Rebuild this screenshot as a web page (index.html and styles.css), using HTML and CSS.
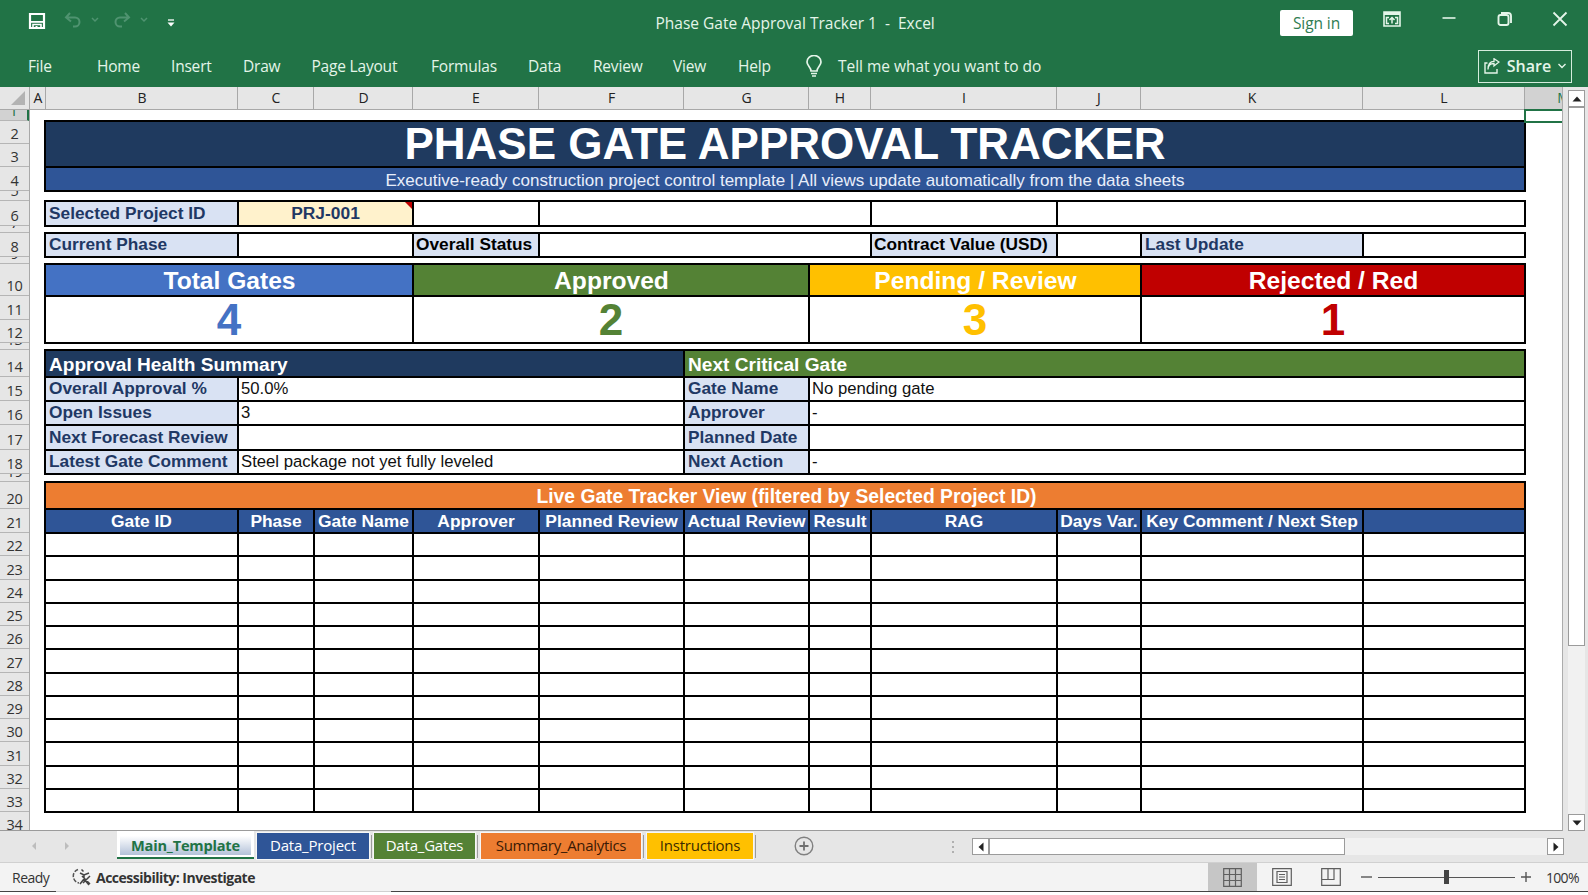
FILE: index.html
```html
<!DOCTYPE html>
<html lang="en">
<head>
    <meta charset="UTF-8">
    <meta name="viewport" content="width=device-width, initial-scale=1.0">
    <title>Phase Gate Approval Tracker 1 - Excel</title>
    <link rel="stylesheet" href="styles.css">
</head>
<body>
    <div class="window">
        <!-- Title bar -->
        <header class="titlebar">
            <div class="quick-access">
                <svg width="18" height="18" viewBox="0 0 18 18"><path d="M2 2h14v14H2z" fill="none" stroke="#fff" stroke-width="2.200"/><path d="M2.500 9h13v1.800h-13z" fill="#fff"/><path d="M5 16v-3.500h8V16" fill="none" stroke="#fff" stroke-width="1.600"/><path d="M7.500 14h2v3h-2z" fill="#fff"/></svg>
                <svg class="dim undo" width="18" height="16" viewBox="0 0 18 16"><path d="M6 1L2 5.500L7 9.500M2.500 5.500H11a4.500 4.500 0 0 1 0 9H9" fill="none" stroke="currentColor" stroke-width="2"/></svg>
                <svg class="dim caret" width="8" height="6" viewBox="0 0 8 6"><path d="M1 1l3 3 3-3" fill="none" stroke="currentColor" stroke-width="1.500"/></svg>
                <svg class="dim redo" width="18" height="16" viewBox="0 0 18 16"><path d="M12 1l4 4.500L11 9.500M15.500 5.500H7a4.500 4.500 0 0 0 0 9H9" fill="none" stroke="currentColor" stroke-width="2"/></svg>
                <svg class="dim caret" width="8" height="6" viewBox="0 0 8 6"><path d="M1 1l3 3 3-3" fill="none" stroke="currentColor" stroke-width="1.500"/></svg>
                <svg class="customize" width="8" height="9" viewBox="0 0 8 9"><path d="M1 1h6" stroke="#fff" stroke-width="1.300"/><path d="M0.500 3.500h7L4 7.500z" fill="#fff"/></svg>
            </div>
            <div class="doc-title">Phase Gate Approval Tracker 1&nbsp; -&nbsp; Excel</div>
            <div class="window-buttons">
                <button class="sign-in">Sign in</button>
                <svg class="ribbon-opt" width="18" height="16" viewBox="0 0 18 16"><path d="M1 1h16v14H1z" fill="none" stroke="#e4f5e9" stroke-width="1.600"/><path d="M1 1h16v3H1z" fill="#e4f5e9"/><path d="M9 12.500V7M6.500 9L9 6.500 11.500 9M6 12.500H3.500V6.500H6M12 12.500h2.500V6.500H12" fill="none" stroke="#e4f5e9" stroke-width="1.500"/></svg>
                <svg class="minimize" width="14" height="16" viewBox="0 0 14 16"><path d="M0.500 7h13" stroke="#e4f5e9" stroke-width="1.600"/></svg>
                <svg class="restore" width="16" height="16" viewBox="0 0 16 16"><rect x="1.500" y="4" width="10" height="10" rx="2" fill="none" stroke="#e4f5e9" stroke-width="1.900"/><path d="M4 2h7a3 3 0 0 1 3 3v7" fill="none" stroke="#e4f5e9" stroke-width="1.900"/></svg>
                <svg class="close" width="16" height="16" viewBox="0 0 16 16"><path d="M1.500 1.500l13 13M14.500 1.500l-13 13" stroke="#e4f5e9" stroke-width="1.800"/></svg>
            </div>
        </header>

        <!-- Ribbon tabs -->
        <nav class="ribbon">
            <a>File</a><a>Home</a><a>Insert</a><a>Draw</a><a>Page Layout</a><a>Formulas</a>
            <a>Data</a><a>Review</a><a>View</a><a>Help</a>
            <svg class="bulb" width="16" height="22" viewBox="0 0 16 22"><path d="M5 16c0-4-4-5-4-9a7 6.500 0 0 1 14 0c0 4-4 5-4 9z" fill="none" stroke="#e4f5e9" stroke-width="1.700"/><path d="M5 18.500h6M6 21h4" fill="none" stroke="#e4f5e9" stroke-width="1.700"/></svg>
            <span class="tell-me">Tell me what you want to do</span>
            <button class="share">
                <svg width="16" height="16" viewBox="0 0 16 16"><path d="M3.500 5H1v10h12v-4" fill="none" stroke="#e4f5e9" stroke-width="1.400"/><path d="M4 11.500c0-4 2.500-6 6-6V8l5-4-5-3.300v2.600c-3 0-6 2-6 8.200" fill="none" stroke="#e4f5e9" stroke-width="1.300"/></svg>
                <span>Share</span>
                <svg width="8" height="6" viewBox="0 0 8 6"><path d="M0.500 1l3.500 3.500L7.500 1" fill="none" stroke="#e4f5e9" stroke-width="1.400"/></svg>
            </button>
        </nav>

        <!-- Worksheet -->
        <main class="workbook">
            <div class="sheet">
                <div class="col-heads" id="colHeads">
                    <span class="corner"><svg width="14" height="14" viewBox="0 0 14 14"><path d="M14 0v14H0z" fill="#b3b3b3"/></svg></span>
                </div>
                <div class="sheet-body">
                    <div class="row-heads" id="rowHeads"></div>
                    <div class="cells">
                        <div class="row h46"><div class="cell title s11">PHASE GATE APPROVAL TRACKER</div></div>
                        <div class="row h24"><div class="cell subtitle s11">Executive-ready construction project control template | All views update automatically from the data sheets</div></div>

                        <div class="row h25 gap10">
                            <div class="cell label">Selected Project ID</div>
                            <div class="cell picker s2">PRJ-001</div>
                            <div class="cell"></div>
                            <div class="cell s3"></div>
                            <div class="cell"></div>
                            <div class="cell s3"></div>
                        </div>

                        <div class="row h24 gap7">
                            <div class="cell label">Current Phase</div>
                            <div class="cell s2"></div>
                            <div class="cell label dark">Overall Status</div>
                            <div class="cell s3"></div>
                            <div class="cell label dark">Contract Value (USD)</div>
                            <div class="cell"></div>
                            <div class="cell label">Last Update</div>
                            <div class="cell"></div>
                        </div>

                        <div class="row h32 gap7">
                            <div class="cell kpi blue s3">Total Gates</div>
                            <div class="cell kpi green s3">Approved</div>
                            <div class="cell kpi yellow s3">Pending / Review</div>
                            <div class="cell kpi red s2">Rejected / Red</div>
                        </div>
                        <div class="row h47">
                            <div class="cell num blue-text s3">4</div>
                            <div class="cell num green-text s3">2</div>
                            <div class="cell num yellow-text s3">3</div>
                            <div class="cell num red-text s2">1</div>
                        </div>

                        <div class="row h27 gap7">
                            <div class="cell section navy s5">Approval Health Summary</div>
                            <div class="cell section green s6">Next Critical Gate</div>
                        </div>
                        <div class="row h24">
                            <div class="cell label">Overall Approval %</div>
                            <div class="cell value s4">50.0%</div>
                            <div class="cell label">Gate Name</div>
                            <div class="cell value s5">No pending gate</div>
                        </div>
                        <div class="row h24">
                            <div class="cell label">Open Issues</div>
                            <div class="cell value s4">3</div>
                            <div class="cell label">Approver</div>
                            <div class="cell value s5">-</div>
                        </div>
                        <div class="row h25">
                            <div class="cell label">Next Forecast Review</div>
                            <div class="cell value s4"></div>
                            <div class="cell label">Planned Date</div>
                            <div class="cell value s5"></div>
                        </div>
                        <div class="row h24">
                            <div class="cell label">Latest Gate Comment</div>
                            <div class="cell value s4">Steel package not yet fully leveled</div>
                            <div class="cell label">Next Action</div>
                            <div class="cell value s5">-</div>
                        </div>

                        <div class="row h27 gap8"><div class="cell section live s11">Live Gate Tracker View (filtered by Selected Project ID)</div></div>
                        <div class="row h24">
                            <div class="cell th">Gate ID</div>
                            <div class="cell th">Phase</div>
                            <div class="cell th">Gate Name</div>
                            <div class="cell th">Approver</div>
                            <div class="cell th">Planned Review</div>
                            <div class="cell th">Actual Review</div>
                            <div class="cell th">Result</div>
                            <div class="cell th">RAG</div>
                            <div class="cell th">Days Var.</div>
                            <div class="cell th">Key Comment / Next Step</div>
                            <div class="cell th"></div>
                        </div>
                        <div id="emptyRows"></div>
                    </div>
                    <div class="active-cell"></div>
                </div>
            </div>
            <div class="vscroll">
                <button class="arrow"><svg width="10" height="6" viewBox="0 0 10 6"><path d="M5 0.500l4.500 5h-9z" fill="#222"/></svg></button>
                <div class="vthumb"></div>
                <button class="arrow down"><svg width="10" height="6" viewBox="0 0 10 6"><path d="M5 5.500l4.500-5h-9z" fill="#222"/></svg></button>
            </div>
        </main>

        <!-- Sheet tabs -->
        <div class="tabbar">
            <div class="tab-nav">
                <svg width="6" height="8" viewBox="0 0 6 8"><path d="M5 0v8L1 4z" fill="#bdbdbd"/></svg>
                <svg width="6" height="8" viewBox="0 0 6 8"><path d="M1 0v8l4-4z" fill="#bdbdbd"/></svg>
            </div>
            <div class="tab active"><span>Main_Template</span></div>
            <div class="tab t-project">Data_Project</div>
            <div class="tab t-gates">Data_Gates</div>
            <div class="tab t-summary">Summary_Analytics</div>
            <div class="tab t-instr">Instructions</div>
            <svg class="add-sheet" width="20" height="20" viewBox="0 0 20 20"><circle cx="10" cy="10" r="8.800" fill="none" stroke="#808080" stroke-width="1.400"/><path d="M10 5.500v9M5.500 10h9" stroke="#707070" stroke-width="1.800"/></svg>
            <svg class="dots" width="4" height="14" viewBox="0 0 4 14"><path d="M1 1h2v2H1zM1 6h2v2H1zM1 11h2v2H1z" fill="#b0b0b0"/></svg>
            <div class="hscroll">
                <button class="arrow"><svg width="6" height="10" viewBox="0 0 6 10"><path d="M0.500 5l5-4.500v9z" fill="#222"/></svg></button>
                <div class="hthumb"></div>
                <button class="arrow right"><svg width="6" height="10" viewBox="0 0 6 10"><path d="M5.500 5l-5-4.500v9z" fill="#222"/></svg></button>
            </div>
        </div>

        <!-- Status bar -->
        <footer class="status">
            <span class="ready">Ready</span>
            <svg class="access" width="20" height="18" viewBox="0 0 20 18"><path d="M6 1.500a7 7 0 0 0 1 13.500" fill="none" stroke="#555" stroke-width="1.500" stroke-dasharray="4 1.500"/><path d="M8 5l4 2 5-2M9.500 1.500l2 2M12 7v4M8 16l4-5 5 6M10 8l8 8M18 8l-7 7" fill="none" stroke="#444" stroke-width="1.500"/></svg>
            <span class="access-text">Accessibility: Investigate</span>
            <div class="views">
                <span class="view on"><svg width="19" height="19" viewBox="0 0 19 19"><path d="M0.700 0.700h17.600v17.600H0.700zM6.500 1v17M12.500 1v17M1 6.500h17M1 12.500h17" fill="none" stroke="#5f5f5f" stroke-width="1.200"/></svg></span>
                <span class="view"><svg width="20" height="18" viewBox="0 0 20 18"><path d="M0.700 0.700h18.600v16.600H0.700zM5 3.500h10v11H5zM7 6.500h6M7 9h6M7 11.500h6" fill="none" stroke="#5f5f5f" stroke-width="1.200"/></svg></span>
                <span class="view"><svg width="20" height="18" viewBox="0 0 20 18"><path d="M0.700 0.700h18.600v16.600H0.700zM7 1v10M1 11.500h12V1" fill="none" stroke="#5f5f5f" stroke-width="1.200"/></svg></span>
            </div>
            <div class="zoom">
                <svg width="11" height="10" viewBox="0 0 11 10"><path d="M0 5h11" stroke="#555" stroke-width="1.400"/></svg>
                <div class="slider"><i></i></div>
                <svg width="10" height="10" viewBox="0 0 10 10"><path d="M0 5h10M5 0v10" stroke="#555" stroke-width="1.400"/></svg>
                <span>100%</span>
            </div>
        </footer>
        <div class="edge"><i class="dark"></i><i class="light"></i><i class="dark"></i></div>
    </div>

    <script>
        // Column letters
        const colHeads = document.getElementById('colHeads');
        'ABCDEFGHIJKLM'.split('').forEach(letter => {
            const head = document.createElement('span');
            head.textContent = letter;
            if (letter === 'M') head.className = 'selected';
            colHeads.appendChild(head);
        });

        // Row numbers with the height of each row
        const heights = [11, 23, 23, 24, 10, 25, 7, 24, 7, 32, 24, 23, 7, 27, 24, 24, 25, 24, 8, 27, 24];
        const rowHeads = document.getElementById('rowHeads');
        for (let i = 1; i <= 34; i++) {
            const head = document.createElement('div');
            const height = heights[i - 1] || 23.25;
            head.className = i === 1 ? 'row-head selected' : 'row-head';
            head.style.height = height + 'px';
            head.innerHTML = `<span>${i}</span>`;
            rowHeads.appendChild(head);
        }

        // Empty tracker rows 22-33
        const emptyRows = document.getElementById('emptyRows');
        for (let i = 0; i < 12; i++) {
            const row = document.createElement('div');
            row.className = 'row empty';
            row.innerHTML = '<div class="cell"></div>'.repeat(11);
            emptyRows.appendChild(row);
        }
    </script>
</body>
</html>
```
FILE: styles.css
```css
* {
    margin: 0;
    padding: 0;
    box-sizing: border-box;
}

:root {
    --cols: 193px 76px 99px 126px 145px 125px 62px 186px 84px 222px 162px;
}

body {
    width: 1588px;
    height: 895px;
    overflow: hidden;
    background: #fff;
    font-family: "Open Sans", "Noto Sans", sans-serif;
}

svg {
    display: block;
    flex: none;
}

button {
    font-family: inherit;
    border: none;
    background: none;
}

.window {
    display: flex;
    flex-direction: column;
    height: 895px;
}

/* Title bar */
.titlebar {
    height: 46px;
    background: #217346;
    display: grid;
    grid-template-columns: 1fr 277px 1fr;
    color: #e4f5e9;
}

.quick-access {
    display: flex;
    align-items: flex-start;
    padding: 12px 0 0 28px;
}

.quick-access .dim {
    color: #4f9370;
}

.undo {
    margin-left: 18px;
}

.redo {
    margin-left: 14px;
}

.quick-access .caret {
    margin: 5px 0 0 9px;
}

.quick-access .customize {
    margin: 7px 0 0 19px;
}

.doc-title {
    font-size: 15.5px;
    line-height: 46px;
    text-align: center;
    white-space: nowrap;
}

.window-buttons {
    display: flex;
    justify-content: flex-end;
    align-items: flex-start;
    padding: 11px 20px 0 0;
}

.sign-in {
    width: 73px;
    height: 26px;
    margin-right: 30px;
    margin-top: -1px;
    background: #fff;
    border-radius: 2px;
    color: #2f7d52;
    font-size: 15.5px;
    letter-spacing: -0.1px;
}

.minimize {
    margin-left: 41px;
}

.restore {
    margin-left: 41px;
}

.close {
    margin-left: 39px;
}

/* Ribbon */
.ribbon {
    height: 41px;
    background: #217346;
    display: grid;
    grid-template-columns: 69px 74px 72px 68.5px 119.5px 97px 65px 80px 65px 68px 32px 1fr auto;
    padding: 0 16px 1px 28px;
    align-items: center;
    color: #e4f5e9;
    font-size: 15.5px;
    letter-spacing: -0.2px;
    white-space: nowrap;
}

.tell-me {
    margin-top: -1px;
    letter-spacing: -0.02px;
}

.share {
    width: 94px;
    height: 33px;
    border: 1px solid #d5ecdd;
    color: #e4f5e9;
    display: flex;
    align-items: center;
    justify-content: space-between;
    padding: 0 5px;
    font-size: 16px;
    font-weight: 600;
}

/* Worksheet */
.workbook {
    height: 744px;
    display: flex;
    background: #e6e6e6;
}

.sheet {
    width: 1563px;
    overflow: hidden;
    border-right: 1px solid #acacac;
    border-bottom: 1px solid #9b9b9b;
    background: #fff;
}

.col-heads {
    height: 23px;
    display: grid;
    grid-template-columns: 30px 16px 192px 76px 99px 126px 145px 125px 62px 186px 84px 222px 162px 76px;
    background: #e6e6e6;
    border-bottom: 1px solid #a8a8a8;
    font-size: 14px;
    color: #222;
}

.col-heads span {
    border-right: 1px solid #a8a8a8;
    padding-left: 1px;
    text-align: center;
    line-height: 22px;
}

.col-heads .corner {
    display: flex;
    align-items: flex-end;
    justify-content: flex-end;
    padding: 0 4px 4px 0;
}

.col-heads .selected {
    background: #d2d2d2;
    color: #217346;
    border: none;
}

.sheet-body {
    display: flex;
    position: relative;
    height: 720px;
}

.row-heads {
    width: 30px;
    background: #e6e6e6;
    border-right: 1px solid #a8a8a8;
}

.row-head {
    display: flex;
    align-items: flex-end;
    justify-content: center;
    overflow: hidden;
    border-bottom: 1px solid #b5b5b5;
    font-size: 14.5px;
    line-height: 18px;
    letter-spacing: -0.2px;
    color: #333;
}

.row-head.selected {
    background: #d2d2d2;
    border-right: 2px solid #217346;
    color: #217346;
}

.cells {
    padding: 11px 0 0 15px;
    font-family: "Liberation Sans", Arial, sans-serif;
}

.row {
    display: grid;
    grid-template-columns: var(--cols);
}

.h24 { height: 24px; }
.h25 { height: 25px; }
.h27 { height: 27px; }
.h32 { height: 32px; }
.h46 { height: 46px; }
.h47 { height: 47px; }
.empty { height: 23.25px; }

.gap7 { margin-top: 7px; }
.gap8 { margin-top: 8px; }
.gap10 { margin-top: 10px; }

.s2 { grid-column: span 2; }
.s3 { grid-column: span 3; }
.s4 { grid-column: span 4; }
.s5 { grid-column: span 5; }
.s6 { grid-column: span 6; }
.s11 { grid-column: span 11; }

/* Neighbouring cells share one 2px line */
.cell {
    margin: -1px;
    border: 2px solid #000;
    background: #fff;
    display: flex;
    align-items: center;
    white-space: nowrap;
    font-size: 17.4px;
    line-height: 1;
}

.title {
    background: #1f3a5f;
    color: #fff;
    font-size: 44px;
    font-weight: bold;
    justify-content: center;
    padding-bottom: 1px;
}

.subtitle {
    background: #2f5597;
    color: #e8eefa;
    font-size: 17px;
    justify-content: center;
    padding-top: 2px;
}

.label {
    background: #d9e2f3;
    color: #1f3864;
    font-weight: bold;
    font-size: 17.3px;
    padding-left: 3px;
}

.label.dark {
    color: #000;
    padding-left: 2px;
}

.picker {
    position: relative;
    background: #fff2cc;
    color: #1f3864;
    font-weight: bold;
    justify-content: center;
}

/* Comment marker */
.picker::after {
    content: "";
    position: absolute;
    top: 0;
    right: 0;
    border-top: 7px solid #c00000;
    border-left: 7px solid transparent;
}

.kpi {
    color: #fff;
    font-size: 24.6px;
    font-weight: bold;
    justify-content: center;
    padding: 2px 0 0 1px;
}

.blue { background: #4472c4; }
.green { background: #548235; }
.yellow { background: #ffc000; }
.red { background: #c00000; }
.navy { background: #1f3a5f; }

.num {
    font-size: 44px;
    font-weight: bold;
    justify-content: center;
    padding-top: 1px;
}

.blue-text { color: #4472c4; }
.green-text { color: #548235; }
.yellow-text { color: #ffc000; }
.red-text { color: #c00000; }

.section {
    color: #fff;
    font-size: 19.1px;
    font-weight: bold;
    padding: 2px 0 0 3px;
}

.section.live {
    background: #ed7d31;
    font-size: 19.3px;
    justify-content: center;
}

.value {
    padding: 1px 0 0 2px;
    font-size: 16.7px;
    color: #111;
}

.th {
    background: #2f5597;
    color: #fff;
    font-weight: bold;
    justify-content: center;
    padding-top: 1px;
}

.active-cell {
    position: absolute;
    left: 1524px;
    top: -1px;
    width: 80px;
    height: 14px;
    border: 2px solid #217346;
}

/* Scroll bars */
.arrow {
    width: 17px;
    height: 17px;
    border: 1px solid #9b9b9b;
    background: #fff;
    display: flex;
    align-items: center;
    justify-content: center;
    flex: none;
}

.vscroll {
    width: 17px;
    margin: 3px 0 0 5px;
    display: flex;
    flex-direction: column;
    background: #f1f1f1;
}

.vthumb {
    width: 17px;
    height: 539px;
    background: #fff;
    border: 1px solid #9b9b9b;
}

.vscroll .down {
    margin-top: auto;
}

/* Sheet tabs */
.tabbar {
    height: 32px;
    background: #e6e6e6;
    border-bottom: 1px solid #d0d0d0;
    display: flex;
    align-items: flex-start;
    font-size: 15px;
    letter-spacing: -0.2px;
}

.tab-nav {
    width: 117px;
    height: 30px;
    display: flex;
    align-items: center;
    gap: 27px;
    padding-left: 31px;
}

.tab {
    height: 26px;
    margin: 2px 0 0 6px;
    text-align: center;
    line-height: 25px;
    position: relative;
    outline: 1px solid #f6f6f6;
}

/* Separator after each tab */
.tab::after {
    content: "";
    position: absolute;
    right: -3px;
    top: 2px;
    height: 23px;
    border-right: 1px solid #9b9b9b;
}

.tab.active {
    width: 137px;
    height: 28px;
    margin: 0;
    padding: 0 3px 2px;
    background: #fff;
    border-bottom: 2px solid #217346;
    color: #217346;
    font-weight: bold;
    outline: none;
}

.tab.active::after {
    display: none;
}

.tab.active span {
    display: block;
    height: 24px;
    line-height: 28px;
    font-size: 14.6px;
    background: linear-gradient(#fff 20%, #b4c2d9);
}

.t-project {
    width: 112px;
    margin-left: 3px;
    background: #2f5597;
    color: #fff;
}

.t-gates {
    width: 101px;
    margin-left: 5px;
    background: #548235;
    color: #fff;
}

.t-summary {
    width: 160px;
    background: #ed7d31;
    color: #3a1a05;
    letter-spacing: -0.3px;
}

.t-instr {
    width: 106px;
    background: #ffc000;
    color: #3a2a00;
}

.add-sheet {
    margin: 5px 0 0 41px;
}

.dots {
    margin: 9px 0 0 137px;
}

.hscroll {
    width: 592px;
    height: 17px;
    margin: 7px 0 0 17px;
    display: flex;
    background: #f1f1f1;
}

.hthumb {
    width: 356px;
    border: 1px solid #9b9b9b;
    background: #fff;
}

.hscroll .right {
    margin-left: auto;
}

/* Status bar */
.status {
    height: 28px;
    background: #f3f3f3;
    display: flex;
    align-items: center;
    font-size: 14px;
    color: #333;
    letter-spacing: -0.5px;
}

.ready {
    width: 59px;
    padding-left: 12px;
}

.access {
    margin-left: 13px;
}

.access-text {
    margin-left: 4px;
    font-weight: bold;
    letter-spacing: -0.5px;
}

.views {
    display: flex;
    height: 28px;
    margin-left: auto;
}

.view {
    width: 49px;
    display: flex;
    align-items: center;
    justify-content: center;
}

.view.on {
    background: #c6c6c6;
}

.zoom {
    width: 233px;
    display: flex;
    align-items: center;
    padding-left: 6px;
}

.slider {
    width: 137px;
    height: 1px;
    margin: 0 6px;
    background: #555;
    display: flex;
    align-items: center;
    justify-content: center;
}

.slider i {
    width: 5px;
    height: 14px;
    background: #444;
}

.zoom span {
    margin-left: 15px;
    letter-spacing: -0.7px;
}

.edge {
    height: 4px;
    display: flex;
    background: #fff;
}

.edge i {
    height: 1px;
}

.edge .dark {
    width: 56px;
    background: #444;
}

.edge .light {
    width: 335px;
    background: #d0d0d0;
}

.edge .dark:last-child {
    flex: 1;
}
```
